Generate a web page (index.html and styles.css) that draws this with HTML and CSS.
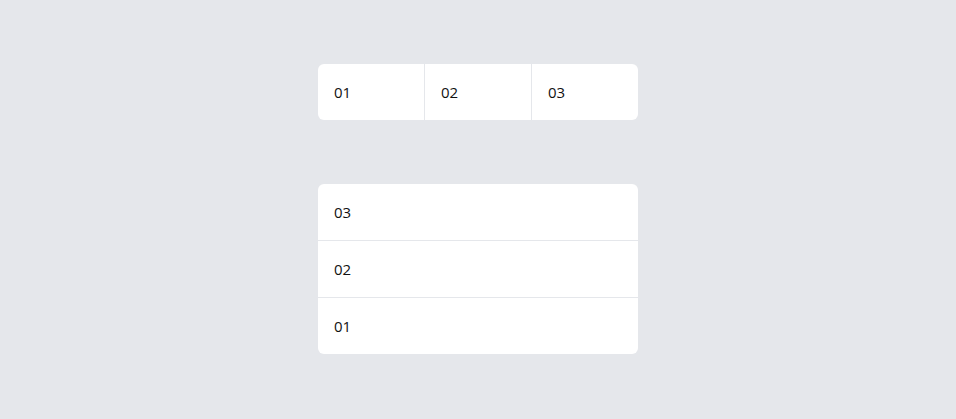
FILE: index.html
```html
<!DOCTYPE html>
<html lang="en">
<head>
    <meta charset="UTF-8">
    <meta name="viewport" content="width=device-width, initial-scale=1.0">
    <title>Order</title>
    <link rel="stylesheet" href="styles.css">
</head>
<body>
    <div class="page">
        <div class="card row">
            <div class="item">01</div>
            <div class="item">02</div>
            <div class="item">03</div>
        </div>
        <div class="card column">
            <div class="item">03</div>
            <div class="item">02</div>
            <div class="item">01</div>
        </div>
    </div>
</body>
</html>
```

FILE: styles.css
```css
body{
    margin: 0;
    background-color: #e5e7eb;
    font-family: "Open Sans", "Noto Sans", sans-serif;
    font-size: 15px;
    color: #111;
}
.page{
    display: flex;
    flex-direction: column;
    align-items: center;
    gap: 64px;
    padding: 64px 0;
}
.card{
    width: 320px;
    background-color: #fff;
    border-radius: 6px;
    overflow: hidden;
}
.item{
    padding: 16px;
    line-height: 24px;
}
/* 가로 배치 */
.row{
    display: grid;
    grid-template-columns: 106px 107px 107px;
}
.row .item + .item{
    border-left: 1px solid #e5e7eb;
}
/* 세로 배치 */
.column{
    display: flex;
    flex-direction: column;
}
.column .item + .item{
    border-top: 1px solid #e5e7eb;
}
```
